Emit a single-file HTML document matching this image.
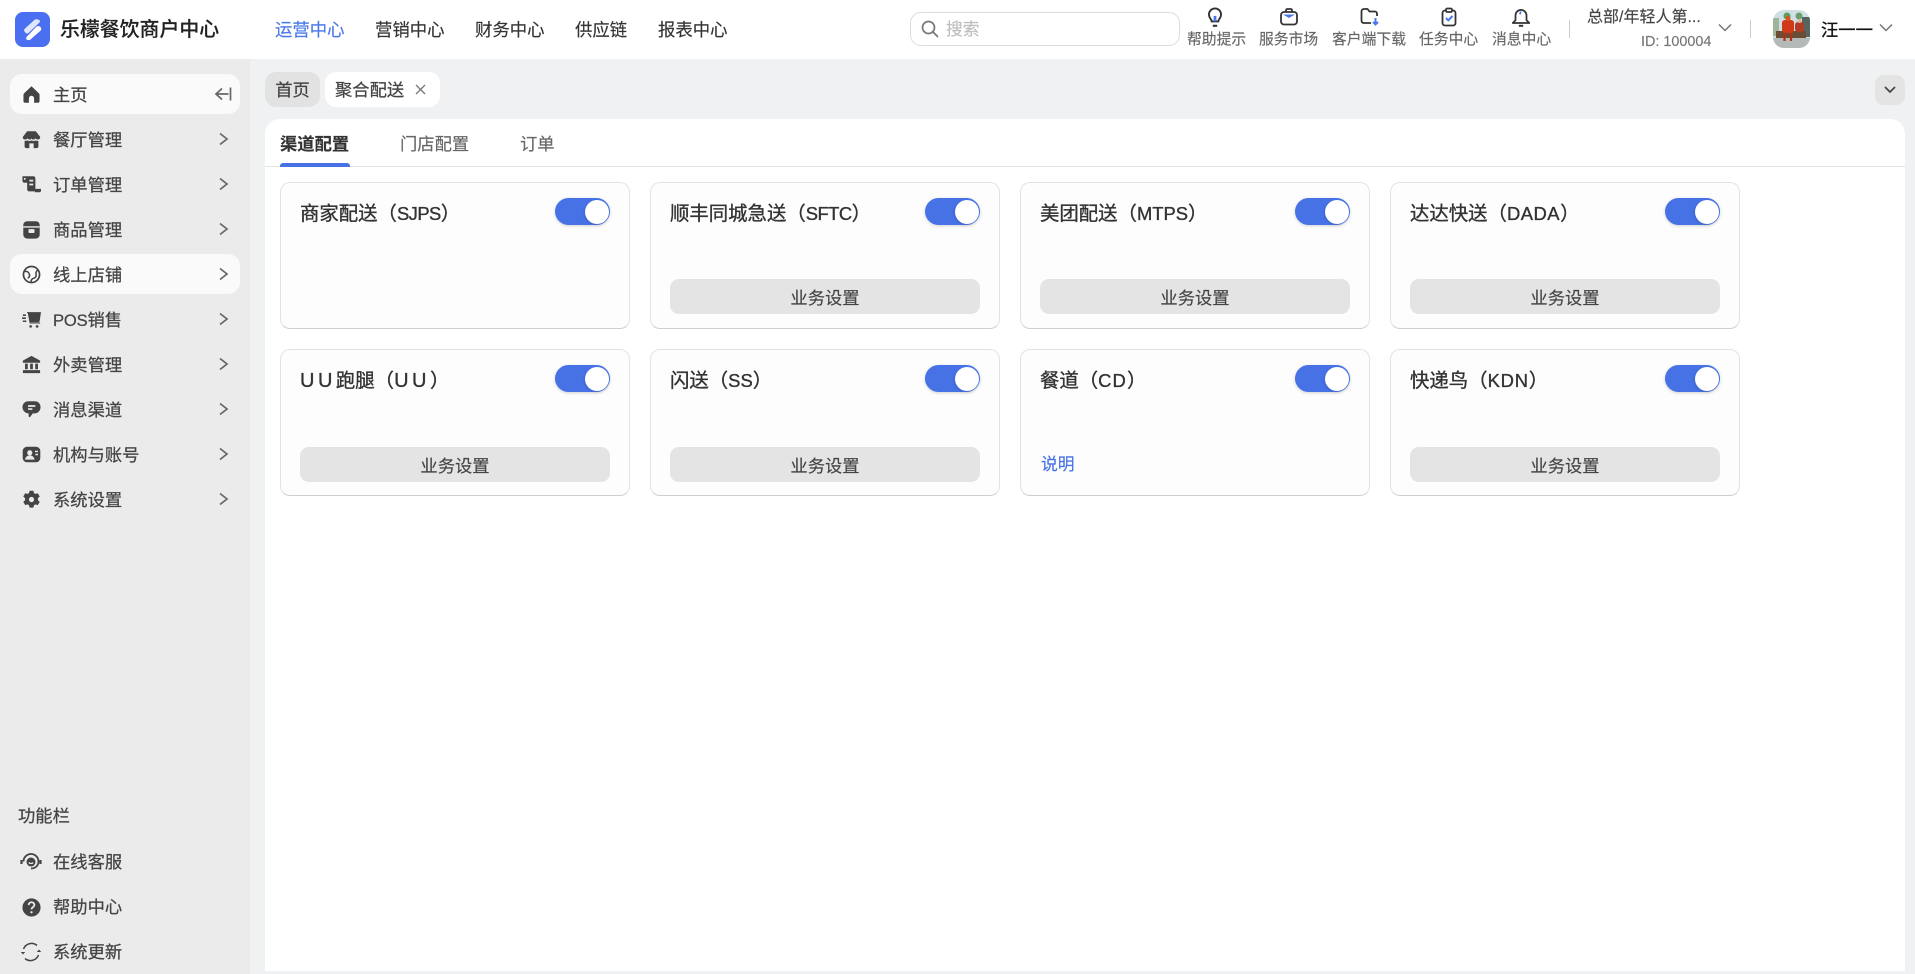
<!DOCTYPE html>
<html lang="zh-CN"><head><meta charset="utf-8"><title>聚合配送</title>
<style>
*{box-sizing:border-box;margin:0;padding:0}
html,body{width:1915px;height:974px;overflow:hidden;background:#f0f1f2;font-family:"Liberation Sans","Noto Sans CJK SC",sans-serif;color:#333;-webkit-text-stroke:.15px}
.a{position:absolute;white-space:nowrap}
.hdr{position:absolute;left:0;top:0;width:1915px;height:59px;background:#fff}
.nav{position:absolute;top:15px;height:30px;line-height:30px;font-size:17.4px;color:#333}
.lab{position:absolute;top:30px;height:20px;line-height:20px;font-size:14.8px;color:#666;white-space:nowrap}
.side{position:absolute;left:0;top:59px;width:250px;height:915px;background:#ebebeb}
.it{position:absolute;left:10px;width:230px;height:40px;border-radius:12px}
.it.on{background:#fafafa}
.it b{position:absolute;left:43px;top:1px;line-height:40px;font-size:17.3px;font-weight:400;color:#444;white-space:nowrap;-webkit-text-stroke:.25px}
.it.bt b{top:0}
.it svg.ic{position:absolute;left:11.5px;top:10.5px;width:19px;height:19px}
.it svg.ch{position:absolute;left:204px;top:10.5px;width:18px;height:18px}
.it .l{font-size:16.6px;letter-spacing:-.2px}
.tab{position:absolute;top:72px;height:35px;border-radius:11px;line-height:37px;font-size:17.3px;color:#444;-webkit-text-stroke:.25px}
.main{position:absolute;left:265px;top:119px;width:1640px;height:852px;background:#fff;border-radius:15px 15px 0 0}
.tt{position:absolute;top:125px;line-height:38px;height:38px;font-size:17.3px;color:#666;white-space:nowrap}
.card{position:absolute;width:350px;height:147px;background:#fdfdfd;border:1px solid #e2e2e2;border-bottom:1.5px solid #cfcfcf;border-radius:10px}
.card h3{position:absolute;left:19px;top:16px;line-height:30px;font-size:19.4px;font-weight:400;color:#333;white-space:nowrap;-webkit-text-stroke:.35px}
.card h3 .l{font-size:18.4px}
.sw{position:absolute;left:274px;top:15px;width:55px;height:27px;border-radius:14px;background:#4672e6;box-shadow:0 1px 3px rgba(0,0,0,.18)}
.sw i{position:absolute;right:1px;top:1.5px;width:24px;height:24px;border-radius:50%;background:#fff;box-shadow:-1px 1px 2px rgba(0,0,0,.12)}
.btn{position:absolute;left:19px;top:96px;width:310px;height:35px;border-radius:9px;background:#e4e4e4;line-height:38px;text-align:center;font-size:17.3px;color:#444}
.r2 .btn{top:97px}
</style></head><body>

<div class="hdr"></div>
<svg class="a" style="left:15px;top:12px" width="35" height="35" viewBox="0 0 35 35"><rect width="35" height="35" rx="8" fill="#4a6ff0"/><path d="M9.500 17 19 8.200c1.500-1.300 3.500-1.200 5.200-.2 1.200 1 .8 2 0 2.800L13.500 21c-1 1-2.500.5-3.500-.7-1-1.200-1.200-2.400-.5-3.300z" fill="#dfe7ff"/><path d="M25.500 15c1 1.200 1 2.500.2 3.500L15.500 27.500c-1.300 1-3 .8-4-.2-.8-1-.4-2 .5-2.800L21 15c1.200-1 3.300-1.200 4.500 0z" fill="#fff"/><path d="M14 20.500 21.500 13.500 24.200 10.800 14 20.500z" fill="#a9bcf7"/></svg>
<div class="a" style="left:60px;top:14px;line-height:32px;font-size:19.9px;font-weight:500;color:#222">乐檬餐饮商户中心</div>
<div class="nav" style="left:275px;color:#4a78ea">运营中心</div>
<div class="nav" style="left:375px">营销中心</div>
<div class="nav" style="left:475px">财务中心</div>
<div class="nav" style="left:575px">供应链</div>
<div class="nav" style="left:658px">报表中心</div>

<div class="a" style="left:910px;top:12px;width:270px;height:34px;border:1px solid #dcdcdc;border-radius:11px;background:#fff"></div>
<svg class="a" style="left:921px;top:20px" width="18" height="18" viewBox="0 0 18 18" fill="none" stroke="#777" stroke-width="1.700"><circle cx="7.500" cy="7.500" r="6"/><path d="m12 12 4.500 4.500" stroke-linecap="round"/></svg>
<div class="a" style="left:946px;top:17px;line-height:26px;font-size:16.800px;color:#bdbdbd">搜索</div>

<svg class="a" style="left:1204px;top:6px" width="22" height="22" viewBox="0 0 20 20" fill="none" stroke="#333" stroke-width="1.700"><path d="M7 14c0-2-2.500-3-2.500-6.300a5.500 5.500 0 0 1 11 0C15.500 11 13 12 13 14z"/><path d="M8 18h4" stroke-width="1.900"/><path d="M10 9v5" stroke="#4a78ea" stroke-width="2.500"/></svg>
<svg class="a" style="left:1279px;top:7px" width="20" height="20" viewBox="0 0 20 20" fill="none" stroke="#333" stroke-width="1.800"><rect x="2" y="5" width="16" height="12.500" rx="3"/><path d="M7 5V3.500C7 2.500 7.500 2 8.500 2h3c1 0 1.500.5 1.500 1.500V5"/><path d="M4 7.500h12L10 11z" fill="#4a78ea" stroke="none"/></svg>
<svg class="a" style="left:1360px;top:7px" width="20" height="20" viewBox="0 0 20 20" fill="none" stroke="#333" stroke-width="1.800"><path d="M11 16H4c-1.500 0-2.500-1-2.500-2.500v-9C1.500 3 2.500 2 4 2h3.500l2 2.500H15c1 0 2 1 2 2V9"/><path d="M15.500 11v6M13 15l2.500 2.500L18 15" stroke="#4a78ea" stroke-width="2"/></svg>
<svg class="a" style="left:1439px;top:7px" width="20" height="20" viewBox="0 0 20 20" fill="none" stroke="#333" stroke-width="1.800"><rect x="3.500" y="3.500" width="13" height="15" rx="2.500"/><rect x="7" y="1.500" width="6" height="3.500" rx="1.200" fill="#fff"/><path d="m7 11 2.300 2.300L13.500 9" stroke="#4a78ea" stroke-width="2"/></svg>
<svg class="a" style="left:1510px;top:6px" width="22" height="22" viewBox="0 0 20 20" fill="none" stroke="#333" stroke-width="1.600"><path d="M5 13V8.500a5 5 0 0 1 10 0V13l2.500 2.500h-15z" stroke-linejoin="round"/><path d="M8 18h4" stroke-width="1.800"/><path d="M9.800 5 9 7.500" stroke="#4a78ea" stroke-width="1.600"/></svg>

<div class="lab" style="left:1187px">帮助提示</div>
<div class="lab" style="left:1259px">服务市场</div>
<div class="lab" style="left:1332px">客户端下载</div>
<div class="lab" style="left:1419px">任务中心</div>
<div class="lab" style="left:1492px">消息中心</div>

<div class="a" style="left:1569px;top:20px;width:1px;height:18px;background:#ccc"></div>
<div class="a" style="left:1587px;top:7px;line-height:22px;font-size:16px;color:#444">总部/年轻人第...</div>
<div class="a" style="left:1641px;top:32px;line-height:20px;font-size:14.400px;color:#777">ID: 100004</div>
<svg class="a" style="left:1717px;top:22px" width="16" height="12" viewBox="0 0 16 12" fill="none" stroke="#777" stroke-width="1.500"><path d="m2 2.500 6 6 6-6"/></svg>
<div class="a" style="left:1750px;top:20px;width:1px;height:18px;background:#ccc"></div>

<svg class="a" style="left:1773px;top:10px" width="37" height="38" viewBox="0 0 37 38"><defs><clipPath id="av"><rect width="37" height="38" rx="11"/></clipPath></defs><g clip-path="url(#av)"><rect width="37" height="38" fill="#cfe0e4"/><rect y="28" width="37" height="10" fill="#b4bab8"/><rect x="29" y="7" width="8" height="20" fill="#56665c"/><rect x="0" y="8" width="6" height="18" fill="#9fb59a"/><circle cx="14" cy="6" r="3.500" fill="#5f9a62"/><circle cx="26" cy="6" r="3.500" fill="#6c9e70"/><rect x="3" y="21" width="30" height="7" fill="#6a4d34"/><rect x="9" y="10" width="12" height="13" rx="3" fill="#d03a18"/><rect x="22" y="12" width="9" height="10" rx="3" fill="#b33c26"/><path d="M11.500 23v8M18 23v8" stroke="#b5301a" stroke-width="2.200"/><circle cx="15" cy="8.500" r="2.500" fill="#d9541f"/><circle cx="26.500" cy="11" r="2" fill="#e0b39a"/></g></svg>
<div class="a" style="left:1821px;top:15px;line-height:30px;font-size:17.300px;color:#111;-webkit-text-stroke:.35px">汪一一</div>
<svg class="a" style="left:1878px;top:22px" width="16" height="12" viewBox="0 0 16 12" fill="none" stroke="#777" stroke-width="1.500"><path d="m2 2.500 6 6 6-6"/></svg>

<div class="side"></div>

<div class="it on" style="top:74px"><svg class="ic" viewBox="0 0 22 22" fill="#444"><path d="M11 1.500 2.500 9.500c-.5.500-.8 1-.8 1.800v7.500c0 1 .7 1.700 1.700 1.700h4.600v-5a3 3 0 0 1 6 0v5h4.600c1 0 1.700-.7 1.700-1.700v-7.500c0-.8-.3-1.300-.8-1.800z"/></svg><b>主页</b><svg class="a" style="left:204px;top:12px" width="18" height="16" viewBox="0 0 18 16" fill="none" stroke="#666" stroke-width="1.700"><path d="M8 2.500 2 8l6 5.500M2 8h12.500M16.500 1.500v13"/></svg></div>

<div class="it" style="top:119px"><svg class="ic" viewBox="0 0 22 22" fill="#444"><path d="M6 1.500h10l5 6.500c.3 2-1 3-2.500 3-1.200 0-2.200-.6-2.700-1.500C15.200 10.400 14.300 11 13 11s-1.700-.6-2-1.500c-.3.900-1 1.500-2 1.500s-2.200-.6-2.700-1.500C5.800 10.400 5 11 3.500 11 2 11 .7 10 1 8z"/><path d="M3 12.500c1.200.3 2.300 0 3-.5 1.600 1 3.500 1 5 0 1.500 1 3.400 1 5 0 .7.500 1.800.8 3 .5V19c0 1.200-.8 2-2 2h-3.500v-5.500h-5V21H5c-1.200 0-2-.8-2-2z"/></svg><b>餐厅管理</b><svg class="ch" viewBox="0 0 18 18" fill="none" stroke="#666" stroke-width="1.700"><path d="m6 3.500 7 5.500-7 5.500"/></svg></div>

<div class="it" style="top:164px"><svg class="ic" viewBox="0 0 22 22" fill="#444"><path d="M.5 1.500h12.500c1.500 0 2.500 1 2.500 2.500v12.500c0 1.400.6 2.200 1.500 2.500H8.500C7 19 6 18 6 16.500V9H3C1.500 9 .5 8 .5 6.500z"/><path d="M8.500 6.500H13M8.500 11H13" stroke="#ebebeb" stroke-width="2"/><path d="M15 16h7v2c0 1.200-.7 2-1.700 2H15z"/><circle cx="3.200" cy="4.500" r="1.100" fill="#ebebeb"/></svg><b>订单管理</b><svg class="ch" viewBox="0 0 18 18" fill="none" stroke="#666" stroke-width="1.700"><path d="m6 3.500 7 5.500-7 5.500"/></svg></div>

<div class="it" style="top:209px"><svg class="ic" viewBox="0 0 22 22" fill="#444"><path d="M6 1.500h10c2.500 0 4.500 2 4.500 4.500v11c0 2.500-2 4.500-4.500 4.500H6c-2.500 0-4.500-2-4.500-4.500V6c0-2.500 2-4.500 4.500-4.500z"/><path d="M1.500 8h19" stroke="#ebebeb" stroke-width="1.600"/><rect x="7.500" y="10.500" width="7" height="4.500" rx="1" fill="#ebebeb"/></svg><b>商品管理</b><svg class="ch" viewBox="0 0 18 18" fill="none" stroke="#666" stroke-width="1.700"><path d="m6 3.500 7 5.500-7 5.500"/></svg></div>

<div class="it on" style="top:254px"><svg class="ic" viewBox="0 0 22 22" fill="none" stroke="#444" stroke-width="2"><circle cx="11" cy="11" r="9.300"/><path d="M3 7.500c2.500-.5 4.700.7 5.500 3 .7 1.900 0 3.600-1.800 4.800M10.500 20c-.3-2 .8-4.300 3-4.700 2-.3 3.300-2 2.800-4-.4-1.800.2-4 1.700-5.300" stroke-width="1.800"/></svg><b>线上店铺</b><svg class="ch" viewBox="0 0 18 18" fill="none" stroke="#666" stroke-width="1.700"><path d="m6 3.500 7 5.500-7 5.500"/></svg></div>

<div class="it" style="top:299px"><svg class="ic" viewBox="0 0 22 22" fill="#444"><path d="M6.500 2.500H22l-1.500 10c-.2.900-.8 1.500-1.700 1.500H8.700z"/><path d="M6 3h1.500l2 12H21" stroke="#444" stroke-width="1.300" fill="none"/><circle cx="10" cy="19" r="1.500"/><circle cx="17.500" cy="19" r="1.500"/><path d="M1 6h3.500M0 9.500h4.500M1 13h4" stroke="#444" stroke-width="1.800"/></svg><b><span class="l">POS</span>销售</b><svg class="ch" viewBox="0 0 18 18" fill="none" stroke="#666" stroke-width="1.700"><path d="m6 3.500 7 5.500-7 5.500"/></svg></div>

<div class="it" style="top:344px"><svg class="ic" viewBox="0 0 22 22" fill="#444"><path d="M11 1 21 6.500V9H1V6.500z"/><rect x="3.500" y="10" width="3.200" height="6.500"/><rect x="9.400" y="10" width="3.200" height="6.500"/><rect x="15.300" y="10" width="3.200" height="6.500"/><rect x="1" y="17.500" width="20" height="3.500" rx=".8"/></svg><b>外卖管理</b><svg class="ch" viewBox="0 0 18 18" fill="none" stroke="#666" stroke-width="1.700"><path d="m6 3.500 7 5.500-7 5.500"/></svg></div>

<div class="it" style="top:389px"><svg class="ic" viewBox="0 0 22 22" fill="#444"><path d="M7 1.500h8c3.500 0 6.500 2.800 6.500 6.800s-3 7.200-6.500 7.200h-2.500l-3 4c-.7.800-1.800.3-1.800-.7V15.500C3.500 15.500.5 12 .5 8.300s3-6.800 6.500-6.800z"/><path d="M7 7h8.500M7 10.500h5" stroke="#ebebeb" stroke-width="2"/></svg><b>消息渠道</b><svg class="ch" viewBox="0 0 18 18" fill="none" stroke="#666" stroke-width="1.700"><path d="m6 3.500 7 5.500-7 5.500"/></svg></div>

<div class="it" style="top:434px"><svg class="ic" viewBox="0 0 22 22" fill="#444"><rect x=".8" y="2" width="20.400" height="18" rx="5"/><circle cx="9" cy="9" r="3" fill="#ebebeb"/><path d="M3.500 17c.3-3 2.800-5 5.500-5s5.200 2 5.500 5z" fill="#ebebeb"/><path d="M15 7.500h3.500M15.500 11h3" stroke="#ebebeb" stroke-width="1.600"/></svg><b>机构与账号</b><svg class="ch" viewBox="0 0 18 18" fill="none" stroke="#666" stroke-width="1.700"><path d="m6 3.500 7 5.500-7 5.500"/></svg></div>

<div class="it" style="top:479px"><svg class="ic" viewBox="0 0 22 22"><path fill="#444" d="M8.800.8h4.400l.7 2.800 1.700.9 2.700-.8 2.200 3.800-2.100 2v2.200l2.100 2-2.200 3.800-2.700-.8-1.700.9-.7 2.800H8.800l-.7-2.800-1.700-.9-2.700.8-2.200-3.800 2.100-2V9.500l-2.100-2 2.200-3.800 2.700.8 1.700-.9z"/><circle cx="11" cy="11" r="3" fill="#ebebeb"/></svg><b>系统设置</b><svg class="ch" viewBox="0 0 18 18" fill="none" stroke="#666" stroke-width="1.700"><path d="m6 3.500 7 5.500-7 5.500"/></svg></div>

<div class="a" style="left:18px;top:801px;line-height:30px;font-size:17.300px;color:#444;-webkit-text-stroke:.25px">功能栏</div>

<div class="it bt" style="top:842px"><svg class="ic" viewBox="0 0 22 22" fill="none" stroke="#444" stroke-width="1.800" style="left:10px;top:9px;width:22px;height:22px"><path d="M3.500 10.500a7.500 7.500 0 0 1 15 0c0 4-3 7-7.500 7"/><circle cx="11" cy="11" r="4.500" fill="#444" stroke="none"/><path d="M8.800 11.500c.8 1.300 3.600 1.300 4.400 0" stroke="#ebebeb" stroke-width="1.200"/><path d="M1.500 9v4M20.500 9v4" stroke-width="2.200"/></svg><b>在线客服</b></div>

<div class="it bt" style="top:887px"><svg class="ic" viewBox="0 0 22 22" style="left:10.500px;top:9.500px;width:21px;height:21px"><circle cx="11" cy="11" r="9.500" fill="#444"/><path d="M8 8.500c0-1.700 1.300-3 3-3s3 1.200 3 2.800c0 2.400-3 2.300-3 4.700" fill="none" stroke="#ebebeb" stroke-width="1.900"/><circle cx="11" cy="16" r="1.200" fill="#ebebeb"/></svg><b>帮助中心</b></div>

<div class="it bt" style="top:932px"><svg class="ic" viewBox="0 0 22 22" fill="none" stroke="#444" stroke-width="1.500" style="left:10px;top:9px;width:22px;height:22px"><path d="M3.500 8A8.500 8.500 0 0 1 17 4.500M18.500 14A8.500 8.500 0 0 1 5 17.500"/><path d="m.8 11 2.200 2.500L5.200 11M16.800 11 19 8.500l2.200 2.500" fill="#444" stroke="none"/></svg><b>系统更新</b></div>

<div class="tab" style="left:265px;width:55px;background:#e2e2e2;text-align:center">首页</div>
<div class="tab" style="left:325px;width:115px;background:#fff;padding-left:10px">聚合配送</div>
<svg class="a" style="left:414px;top:83px" width="13" height="13" viewBox="0 0 13 13" stroke="#777" stroke-width="1.300"><path d="m2 2 9 9M11 2l-9 9"/></svg>
<div class="a" style="left:1875px;top:75px;width:30px;height:30px;background:#e4e4e4;border-radius:9px"></div>
<svg class="a" style="left:1884px;top:85px" width="12" height="10" viewBox="0 0 12 10" fill="none" stroke="#444" stroke-width="1.700"><path d="m1 2 5 5 5-5"/></svg>

<div class="main"></div>
<div class="a" style="left:265px;top:166px;width:1640px;height:1px;background:#e3e3e3"></div>
<div class="tt" style="left:280px;color:#333;font-weight:700">渠道配置</div>
<div class="a" style="left:280px;top:163px;width:70px;height:4px;background:#4672e6;border-radius:3px 3px 0 0"></div>
<div class="tt" style="left:400px">门店配置</div>
<div class="tt" style="left:520px">订单</div>

<div class="card" style="left:280px;top:182px"><h3>商家配送（<span class="l" style="letter-spacing:-.55px">SJPS</span>）</h3><div class="sw"><i></i></div></div>
<div class="card" style="left:650px;top:182px"><h3>顺丰同城急送（<span class="l" style="letter-spacing:-.55px">SFTC</span>）</h3><div class="sw"><i></i></div><div class="btn">业务设置</div></div>
<div class="card" style="left:1020px;top:182px"><h3>美团配送（<span class="l">MTPS</span>）</h3><div class="sw"><i></i></div><div class="btn">业务设置</div></div>
<div class="card" style="left:1390px;top:182px"><h3>达达快送（<span class="l" style="letter-spacing:.5px">DADA</span>）</h3><div class="sw"><i></i></div><div class="btn">业务设置</div></div>

<div class="card r2" style="left:280px;top:349px"><h3><span class="l" style="font-size:20px;letter-spacing:3.500px">UU</span>跑腿（<span class="l" style="font-size:20px;letter-spacing:3.500px">UU</span>）</h3><div class="sw"><i></i></div><div class="btn">业务设置</div></div>
<div class="card r2" style="left:650px;top:349px"><h3>闪送（<span class="l">SS</span>）</h3><div class="sw"><i></i></div><div class="btn">业务设置</div></div>
<div class="card r2" style="left:1020px;top:349px"><h3>餐道（<span class="l" style="letter-spacing:1.100px">CD</span>）</h3><div class="sw"><i></i></div><div class="a" style="left:20px;top:102px;line-height:26px;font-size:16.800px;color:#4672e6">说明</div></div>
<div class="card r2" style="left:1390px;top:349px"><h3>快递鸟（<span class="l" style="letter-spacing:.8px">KDN</span>）</h3><div class="sw"><i></i></div><div class="btn">业务设置</div></div>

</body></html>
